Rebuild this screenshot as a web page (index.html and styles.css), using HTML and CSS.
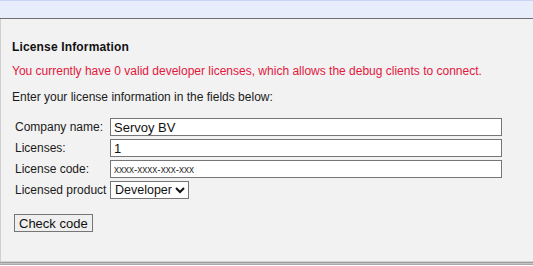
FILE: index.html
```html
<!DOCTYPE html>
<html lang="en">
<head>
    <meta charset="UTF-8">
    <meta name="viewport" content="width=device-width, initial-scale=1.0">
    <title>License Information</title>
    <link rel="stylesheet" href="styles.css">
</head>
<body>

    <div class="top-bar"></div>

    <div class="panel">
        <h3 class="title">License Information</h3>
        <div class="warning">You currently have 0 valid developer licenses, which allows the debug clients to connect.</div>
        <div class="intro">Enter your license information in the fields below:</div>

        <div class="license-form">
            <label class="label" for="company">Company name:</label>
            <input type="text" id="company" class="input-field" value="Servoy BV">

            <label class="label" for="licenses">Licenses:</label>
            <input type="text" id="licenses" class="input-field" value="1">

            <label class="label" for="code">License code:</label>
            <input type="text" id="code" class="input-field code-field" value="xxxx-xxxx-xxx-xxx">

            <label class="label" for="product">Licensed product</label>
            <div class="select-cell">
                <select id="product" class="select-field">
                    <option>Developer</option>
                </select>
            </div>
        </div>

        <button class="check-button">Check code</button>
    </div>

</body>
</html>
```

FILE: styles.css
```css
* {
    box-sizing: border-box;
}
html, body {
    height: 100%;
}
body {
    display: flex;
    flex-direction: column;
    margin: 0;
    background-color: #ffffff;
    font-family: "Liberation Sans", Arial, sans-serif;
    font-size: 12px;
    color: #1a1a1a;
    overflow: hidden;
}
.top-bar {
    height: 19px;
    flex-shrink: 0;
    background-color: #e8edfc;
    border-top: 1px solid #c9d4f6;
    border-bottom: 1px solid #6f6f6f;
}
.panel {
    flex: 1;
    margin-bottom: 4px;
    padding: 21px 11px 0 11px;
    background-color: #f2f2f2;
    border-left: 1px solid #cfcfcf;
    border-bottom: 1px solid #d2d2d2;
    box-shadow: 0 1px 0 #9c9c9c, 0 2px 0 #c4c4c4, 0 3px 0 #a9a9a9;
}
.title {
    margin: 0;
    font-size: 12px;
    line-height: 15px;
    font-weight: bold;
    letter-spacing: 0.15px;
    color: #111;
}
.warning {
    margin-top: 9px;
    line-height: 15px;
    color: #e3173e;
}
.intro {
    margin-top: 11px;
    line-height: 15px;
}
.license-form {
    display: grid;
    grid-template-columns: 95px 392px;
    row-gap: 3px;
    align-items: center;
    margin: 13px 0 0 3px;
}
.label {
    line-height: 15px;
}
.input-field {
    height: 18px;
    padding: 0 3px;
    border: 1px solid #767676;
    background-color: #ffffff;
    font-family: "Liberation Sans", Arial, sans-serif;
    font-size: 13px;
    color: #111;
    outline: none;
}
.code-field {
    font-size: 10px;
    color: #333;
}
.select-cell {
    display: flex;
}
.select-field {
    height: 18px;
    padding: 0;
    border: 1px solid #767676;
    border-radius: 0;
    background-color: #ffffff;
    font-family: "Liberation Sans", Arial, sans-serif;
    font-size: 12.5px;
    color: #111;
}
.check-button {
    display: block;
    margin: 15px 0 0 2px;
    height: 18px;
    padding: 0 4px;
    border: 1px solid #767676;
    border-radius: 0;
    background-color: #efefef;
    font-family: "Liberation Sans", Arial, sans-serif;
    font-size: 13px;
    color: #111;
}
```
